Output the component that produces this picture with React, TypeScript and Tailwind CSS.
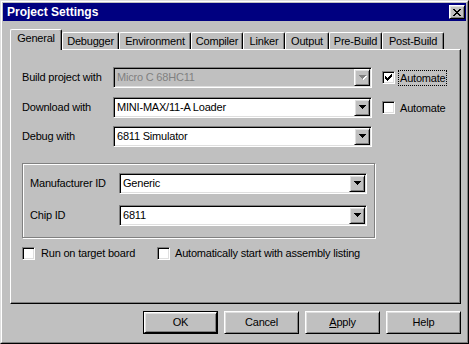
import React from "react";

const raised =
  "border border-t-white border-l-white border-r-black border-b-black shadow-[inset_1px_1px_0_#dfdfdf,inset_-1px_-1px_0_#808080]";
const sunken =
  "border border-t-[#808080] border-l-[#808080] border-r-white border-b-white shadow-[inset_1px_1px_0_#000,inset_-1px_-1px_0_#dfdfdf]";

function Arrow({ disabled }: { disabled?: boolean }) {
  const d = "M0 0h7v1H0zM1 1h5v1H1zM2 2h3v1H2zM3 3h1v1H3z";
  return (
    <svg width="8" height="5" viewBox="0 0 8 5" shapeRendering="crispEdges">
      {disabled && <path d={d} fill="#fff" transform="translate(1 1)" />}
      <path d={d} fill={disabled ? "#808080" : "#000"} />
    </svg>
  );
}

function Combo({
  value,
  w,
  disabled,
}: {
  value: string;
  w: string;
  disabled?: boolean;
}) {
  return (
    <div
      className={`${w} h-[21px] ${sunken} p-px flex ${
        disabled ? "bg-[#c0c0c0] text-[#808080]" : "bg-white text-black"
      }`}
    >
      <div className="flex-1 flex items-center pl-[2px] whitespace-nowrap overflow-hidden">
        {value}
      </div>
      <div className={`w-[16px] h-[17px] bg-[#c0c0c0] ${raised} flex items-center justify-center pl-px`}>
        <Arrow disabled={disabled} />
      </div>
    </div>
  );
}

function Check({ checked }: { checked?: boolean }) {
  return (
    <div className={`w-[13px] h-[13px] shrink-0 bg-white ${sunken} flex items-center justify-center`}>
      {checked && (
        <svg width="7" height="7" viewBox="0 0 7 7" shapeRendering="crispEdges">
          <path
            d="M6 0h1v1H6zM5 1h2v1H5zM0 2h1v1H0zM4 2h3v1H4zM0 3h2v1H0zM3 3h3v1H3zM0 4h5v1H0zM1 5h3v1H1zM2 6h1v1H2z"
            fill="#000"
          />
        </svg>
      )}
    </div>
  );
}

function AutoCheck({ checked, focus }: { checked?: boolean; focus?: boolean }) {
  return (
    <div className="ml-[10px] flex items-center">
      <Check checked={checked} />
      <span
        className={`ml-[3px] border ${
          focus ? "border-dotted border-black" : "border-transparent"
        } px-px py-px leading-[12px]`}
      >
        Automate
      </span>
    </div>
  );
}

function Tab({ label, w, selected }: { label: string; w: string; selected?: boolean }) {
  return (
    <div
      className={`${w} ${
        selected ? "h-[21px] -mb-px relative z-10 pb-[3px]" : "h-[17px]"
      } bg-[#c0c0c0] border-t border-l border-t-white border-l-white border-r border-r-black shadow-[inset_-1px_0_0_#808080] rounded-tl-[2px] rounded-tr-[2px] flex items-center justify-center whitespace-nowrap`}
    >
      {label}
    </div>
  );
}

function Button({ children, def }: { children: React.ReactNode; def?: boolean }) {
  return (
    <div
      className={`w-[75px] h-[23px] ${
        def ? "border border-black" : ""
      } flex`}
    >
      <div className={`flex-1 ${raised} flex items-center justify-center`}>{children}</div>
    </div>
  );
}

export default function App() {
  return (
    <div className="w-[469px] h-[344px] bg-[#c0c0c0] border border-t-[#dfdfdf] border-l-[#dfdfdf] border-r-black border-b-black font-['Liberation_Sans',Arial,sans-serif] text-[11px] tracking-[-0.2px] text-black leading-none select-none">
      <div className="h-full border border-t-white border-l-white border-r-[#808080] border-b-[#808080] p-px flex flex-col">
        <div className="h-[18px] shrink-0 bg-[#000080] flex items-center justify-between pl-[4px] pr-[1px]">
          <span className="text-white font-bold text-[12px] tracking-normal">Project Settings</span>
          <div className={`w-[16px] h-[14px] bg-[#c0c0c0] ${raised} flex items-center justify-center`}>
            <svg width="8" height="7" viewBox="0 0 8 7" shapeRendering="crispEdges">
              <path
                d="M0 0h2v1H0zM6 0h2v1H6zM1 1h2v1H1zM5 1h2v1H5zM2 2h4v1H2zM3 3h2v1H3zM2 4h4v1H2zM1 5h2v1H1zM5 5h2v1H5zM0 6h2v1H0zM6 6h2v1H6z"
                fill="#000"
              />
            </svg>
          </div>
        </div>

        <div className="flex-1 flex flex-col pl-[7px] pr-[5px] pt-[8px]">
          <div className="h-[20px] flex items-end">
            <Tab label="General" w="w-[52px]" selected />
            <Tab label="Debugger" w="w-[57px]" />
            <Tab label="Environment" w="w-[72px]" />
            <Tab label="Compiler" w="w-[52px]" />
            <Tab label="Linker" w="w-[42px]" />
            <Tab label="Output" w="w-[44px]" />
            <Tab label="Pre-Build" w="w-[53px]" />
            <Tab label="Post-Build" w="w-[62px]" />
          </div>

          <div className="h-[255px] border border-t-white border-l-white border-r-black border-b-black shadow-[inset_-1px_-1px_0_#808080] flex flex-col pl-[11px] pt-[17px]">
            <div className="flex items-center h-[21px]">
              <span className="w-[91px]">Build project with</span>
              <Combo value="Micro C 68HC11" w="w-[259px]" disabled />
              <AutoCheck checked focus />
            </div>
            <div className="flex items-center h-[21px] mt-[9px]">
              <span className="w-[91px]">Download with</span>
              <Combo value="MINI-MAX/11-A Loader" w="w-[259px]" />
              <AutoCheck />
            </div>
            <div className="flex items-center h-[21px] mt-[8px]">
              <span className="w-[91px]">Debug with</span>
              <Combo value="6811 Simulator" w="w-[259px]" />
            </div>

            <div className="mt-[16px] w-[353px] h-[75px] border border-[#808080] shadow-[inset_1px_1px_0_#fff,1px_1px_0_#fff] flex flex-col pl-[7px] pt-[9px]">
              <div className="flex items-center h-[21px]">
                <span className="w-[89px]">Manufacturer ID</span>
                <Combo value="Generic" w="w-[248px]" />
              </div>
              <div className="flex items-center h-[21px] mt-[11px]">
                <span className="w-[89px]">Chip ID</span>
                <Combo value="6811" w="w-[248px]" />
              </div>
            </div>

            <div className="mt-[9px] flex items-center">
              <div className="w-[135px] flex items-center">
                <Check />
                <span className="ml-[6px]">Run on target board</span>
              </div>
              <div className="flex items-center">
                <Check />
                <span className="ml-[5px]">Automatically start with assembly listing</span>
              </div>
            </div>
          </div>

          <div className="mt-[7px] flex justify-end gap-[6px]">
            <Button def>OK</Button>
            <Button>Cancel</Button>
            <Button>
              <span>
                <span className="underline">A</span>pply
              </span>
            </Button>
            <Button>Help</Button>
          </div>
        </div>
      </div>
    </div>
  );
}
